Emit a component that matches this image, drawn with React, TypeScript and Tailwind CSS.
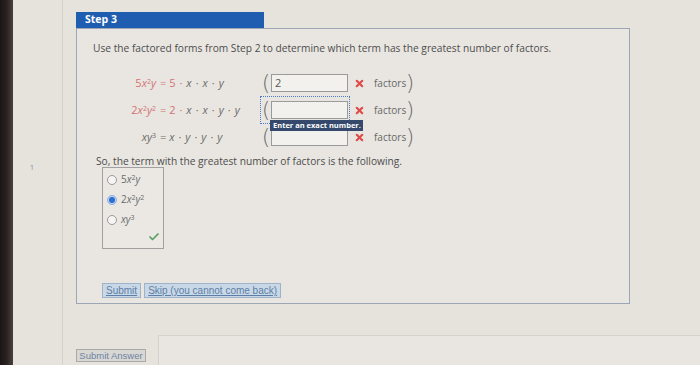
import { Check, X } from "lucide-react"
import type { ReactNode } from "react"

const sans = { fontFamily: '"Open Sans", "DejaVu Sans", sans-serif' }

function V({ children }: { children: ReactNode }) {
  return <span className="italic">{children}</span>
}

function Sup({ children }: { children: ReactNode }) {
  return <sup className="text-[7px]">{children}</sup>
}

function Dot() {
  return <span className="mx-[4px]">·</span>
}

function Paren({ side }: { side: "(" | ")" }) {
  return (
    <span
      className="flex h-[24px] w-[8px] items-center justify-center text-[22px] leading-[24px] font-extralight text-[#6d6d6d]"
      style={{ fontFamily: '"DejaVu Sans", sans-serif' }}
    >
      {side}
    </span>
  )
}

function Row({
  lhs,
  red,
  gray,
  value,
  focused,
}: {
  lhs: ReactNode
  red?: ReactNode
  gray: ReactNode
  value?: string
  focused?: boolean
}) {
  return (
    <div className="flex h-[27px] items-center text-[11px] text-[#6a6a6a]">
      <div className={`w-[57px] text-right ${red ? "text-[#d27373]" : ""}`}>{lhs}</div>
      <div className="w-[106px] pl-[4px] whitespace-nowrap">
        <span className={red ? "text-[#d27373]" : ""}>
          ={" "}
          {red}
        </span>
        {gray}
      </div>
      <div className="flex items-center">
        <div
          className={`relative flex items-center ${
            focused ? "outline-1 outline-dotted outline-[#4b7cc6] outline-offset-[1px]" : ""
          }`}
        >
          <Paren side="(" />
          <div className="ml-[1px] flex h-[18px] w-[77px] items-center border border-[#9a9a9a] bg-[#f3f1ee] px-[3px] text-[11px] text-[#555]">
            {value}
          </div>
          {focused ? (
            <div className="absolute left-[8px] top-[22px] z-10 w-[93px] bg-[#34496b] px-[3px] py-[1px] text-[7.5px] leading-[9px] font-bold text-white whitespace-nowrap">
              Enter an exact number.
            </div>
          ) : null}
        </div>
        <X className="ml-[6px] h-[11px] w-[11px] text-[#e14848]" strokeWidth={4.5} />
        <span className="ml-[9px] text-[10px] text-[#666]">factors</span>
        <Paren side=")" />
      </div>
    </div>
  )
}

function Radio({ checked, children }: { checked?: boolean; children: ReactNode }) {
  return (
    <div className="flex h-[20px] items-center gap-[4px] text-[10px] text-[#6a6a6a]">
      <span
        className={`flex h-[10px] w-[10px] items-center justify-center rounded-full border ${
          checked ? "border-[#8fb1e0] bg-[#bcd3f2]" : "border-[#9a9a9a] bg-[#f6f5f3]"
        }`}
      >
        {checked ? <span className="h-[6px] w-[6px] rounded-full bg-[#2e6cd0]" /> : null}
      </span>
      <span>{children}</span>
    </div>
  )
}

function Btn({ children }: { children: ReactNode }) {
  return (
    <button
      type="button"
      className="h-[15px] border border-[#9eb2c8] bg-[#c9d8e7] px-[3px] text-[10px] leading-[13px] text-[#5d7ea6] underline"
      style={{ fontFamily: '"Liberation Sans", Arial, sans-serif' }}
    >
      {children}
    </button>
  )
}

export default function App() {
  return (
    <div className="flex h-[365px] w-[700px] overflow-hidden bg-[#e6e2dc]" style={sans}>
      <div className="w-[13px] bg-gradient-to-r from-[#1b1515] via-[#2a2222] to-[#4a4040]" />
      <div className="w-[49px] pl-[17px] pt-[163px] text-[7px] text-[#888]">1</div>
      <div className="flex flex-1 flex-col border-l border-[#d3cfc9] pl-[13px] pt-[12px]">
        <div className="flex h-[16px] w-[188px] items-center bg-[#1e5db0] pl-[9px] text-[10.5px] font-bold text-white">
          Step 3
        </div>
        <div className="flex h-[281px] w-[554px] flex-col border border-[#9ba7b5] bg-[#e9e6e1]">
          <p className="pl-[16px] pt-[12px] text-[10.2px] leading-[14px] text-[#4d4d4d]">
            Use the factored forms from Step 2 to determine which term has the greatest number of factors.
          </p>
          <div className="mt-[15px] pl-[22px]">
            <Row
              lhs={
                <>
                  5<V>x</V>
                  <Sup>2</Sup>
                  <V>y</V>
                </>
              }
              red={
                <>
                  5<Dot />
                </>
              }
              gray={
                <>
                  <V>x</V>
                  <Dot />
                  <V>x</V>
                  <Dot />
                  <V>y</V>
                </>
              }
              value="2"
            />
            <Row
              lhs={
                <>
                  2<V>x</V>
                  <Sup>2</Sup>
                  <V>y</V>
                  <Sup>2</Sup>
                </>
              }
              red={
                <>
                  2<Dot />
                </>
              }
              gray={
                <>
                  <V>x</V>
                  <Dot />
                  <V>x</V>
                  <Dot />
                  <V>y</V>
                  <Dot />
                  <V>y</V>
                </>
              }
              focused
            />
            <Row
              lhs={
                <>
                  <V>x</V>
                  <V>y</V>
                  <Sup>3</Sup>
                </>
              }
              gray={
                <>
                  <V>x</V>
                  <Dot />
                  <V>y</V>
                  <Dot />
                  <V>y</V>
                  <Dot />
                  <V>y</V>
                </>
              }
            />
          </div>
          <p className="mt-[4px] pl-[19px] text-[10.2px] leading-[12px] text-[#4d4d4d]">
            So, the term with the greatest number of factors is the following.
          </p>
          <div className="ml-[25px] flex h-[82px] w-[62px] flex-col border border-[#a0a0a0] bg-[#ebe8e4] pl-[4px] pt-[2px]">
            <Radio>
              5<V>x</V>
              <Sup>2</Sup>
              <V>y</V>
            </Radio>
            <Radio checked>
              2<V>x</V>
              <Sup>2</Sup>
              <V>y</V>
              <Sup>2</Sup>
            </Radio>
            <Radio>
              <V>x</V>
              <V>y</V>
              <Sup>3</Sup>
            </Radio>
            <div className="flex justify-end pr-[3px] pt-[1px]">
              <Check className="h-[12px] w-[12px] text-[#5a9f62]" strokeWidth={3.5} />
            </div>
          </div>
          <div className="ml-[25px] mt-[34px] flex gap-[3px]">
            <Btn>Submit</Btn>
            <Btn>Skip (you cannot come back)</Btn>
          </div>
        </div>
        <div className="mt-[31px] flex flex-1">
          <div className="pt-[6px]">
            <button
              type="button"
              className="h-[13px] w-[70px] border border-[#a9a9a9] bg-[#d9d7d4] text-[9.5px] leading-[11px] text-[#6f84a3]"
              style={{ fontFamily: '"Liberation Sans", Arial, sans-serif' }}
            >
              Submit Answer
            </button>
          </div>
          <div className="ml-[12px] flex-1 border-l border-t border-[#d5d1cb] bg-[#e9e6e2]" />
        </div>
      </div>
    </div>
  )
}
